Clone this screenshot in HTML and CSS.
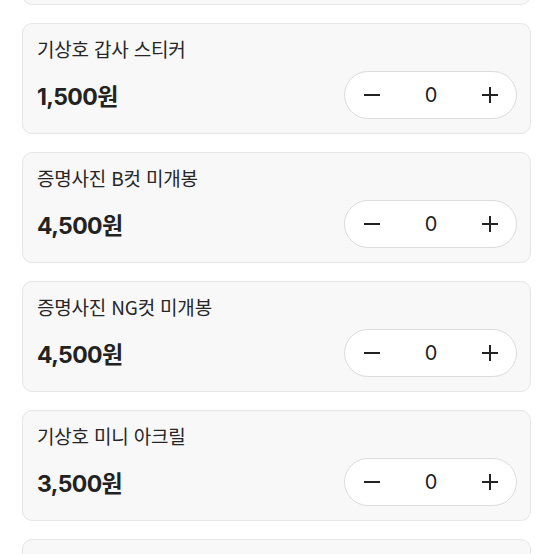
FILE: index.html
```html
<!DOCTYPE html>
<html lang="ko">
<head>
<meta charset="utf-8">
<link rel="stylesheet" href="styles.css">
</head>
<body>
<div class="list">
  <div class="card card-empty"></div>
  <div class="card">
    <div class="title">기상호 갑사 스티커</div>
    <div class="row">
      <div class="price">1,500원</div>
      <div class="stepper">
        <button class="btn"><svg width="18" height="18" viewBox="0 0 18 18"><path d="M1 9h16" stroke="#222" stroke-width="2"/></svg></button>
        <span class="count">0</span>
        <button class="btn"><svg width="18" height="18" viewBox="0 0 18 18"><path d="M1 9h16M9 1v16" stroke="#222" stroke-width="2"/></svg></button>
      </div>
    </div>
  </div>
  <div class="card">
    <div class="title">증명사진 B컷 미개봉</div>
    <div class="row">
      <div class="price">4,500원</div>
      <div class="stepper">
        <button class="btn"><svg width="18" height="18" viewBox="0 0 18 18"><path d="M1 9h16" stroke="#222" stroke-width="2"/></svg></button>
        <span class="count">0</span>
        <button class="btn"><svg width="18" height="18" viewBox="0 0 18 18"><path d="M1 9h16M9 1v16" stroke="#222" stroke-width="2"/></svg></button>
      </div>
    </div>
  </div>
  <div class="card">
    <div class="title">증명사진 NG컷 미개봉</div>
    <div class="row">
      <div class="price">4,500원</div>
      <div class="stepper">
        <button class="btn"><svg width="18" height="18" viewBox="0 0 18 18"><path d="M1 9h16" stroke="#222" stroke-width="2"/></svg></button>
        <span class="count">0</span>
        <button class="btn"><svg width="18" height="18" viewBox="0 0 18 18"><path d="M1 9h16M9 1v16" stroke="#222" stroke-width="2"/></svg></button>
      </div>
    </div>
  </div>
  <div class="card">
    <div class="title">기상호 미니 아크릴</div>
    <div class="row">
      <div class="price">3,500원</div>
      <div class="stepper">
        <button class="btn"><svg width="18" height="18" viewBox="0 0 18 18"><path d="M1 9h16" stroke="#222" stroke-width="2"/></svg></button>
        <span class="count">0</span>
        <button class="btn"><svg width="18" height="18" viewBox="0 0 18 18"><path d="M1 9h16M9 1v16" stroke="#222" stroke-width="2"/></svg></button>
      </div>
    </div>
  </div>
  <div class="card card-empty"></div>
</div>
</body>
</html>
```

FILE: styles.css
```css
html, body {
  margin: 0;
  padding: 0;
  background: #ffffff;
  overflow: hidden;
}
body {
  font-family: "Noto Sans CJK KR", "Noto Sans", sans-serif;
  color: #222;
}
.list {
  display: flex;
  flex-direction: column;
  gap: 18px;
  margin-top: -106px;
  padding: 0 23px 0 22px;
}
.card {
  box-sizing: border-box;
  height: 111px;
  background: #f8f8f8;
  border: 1px solid #e6e6e6;
  border-radius: 10px;
  padding: 13px 13px 0 14px;
  display: flex;
  flex-direction: column;
  gap: 10px;
}
.title {
  font-size: 19px;
  line-height: 24px;
  font-weight: 400;
  color: #262626;
  letter-spacing: -0.2px;
}
.row {
  display: flex;
  align-items: center;
  justify-content: space-between;
}
.price {
  font-family: "Inter", "Noto Sans CJK KR", sans-serif;
  font-size: 23px;
  font-weight: 700;
  color: #222;
  letter-spacing: -0.6px;
}
.stepper {
  box-sizing: border-box;
  width: 173px;
  height: 48px;
  background: #fff;
  border: 1px solid #dcdcdc;
  border-radius: 24px;
  display: flex;
  align-items: center;
  justify-content: space-between;
  padding: 0 17px 0 18px;
}
.btn {
  border: 0;
  background: none;
  padding: 0;
  width: 18px;
  height: 18px;
  display: flex;
}
.count {
  font-family: "Inter", "Noto Sans", sans-serif;
  font-size: 20px;
  color: #222;
}
```
